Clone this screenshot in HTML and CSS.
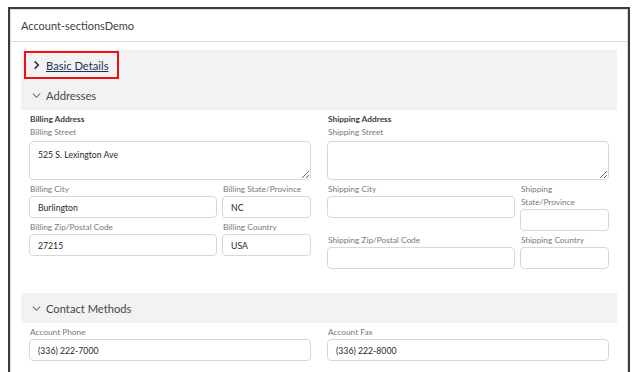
FILE: index.html
```html
<!DOCTYPE html>
<html lang="en">
<head>
  <meta charset="UTF-8" />
  <meta name="viewport" content="width=device-width, initial-scale=1" />
  <title>Account-sectionsDemo</title>
  <link rel="stylesheet" href="styles.css">
</head>
<body>
  <div class="frame">
    <div class="card">
      <div class="card-header">Account-sectionsDemo</div>

      <div class="card-body">
        <!-- collapsed section -->
        <section class="section">
          <div class="section-title collapsed">
            <svg class="chevron" viewBox="0 0 10 10"><path d="M3 1 L7 5 L3 9" /></svg>
            <a class="section-link" href="#">Basic Details</a>
            <span class="annotation"></span>
          </div>
        </section>

        <section class="section">
          <div class="section-title">
            <svg class="chevron" viewBox="0 0 10 10"><path d="M1 3 L5 7 L9 3" /></svg>
            <span>Addresses</span>
          </div>
          <div class="section-content">
            <div class="col">
              <div class="group-title">Billing Address</div>
              <label class="field-label">Billing Street</label>
              <textarea class="field-area" readonly>525 S. Lexington Ave</textarea>
              <div class="field-grid">
                <div class="field">
                  <label class="field-label">Billing City</label>
                  <input class="field-input" type="text" value="Burlington" readonly />
                </div>
                <div class="field">
                  <label class="field-label">Billing State/Province</label>
                  <input class="field-input" type="text" value="NC" readonly />
                </div>
                <div class="field">
                  <label class="field-label">Billing Zip/Postal Code</label>
                  <input class="field-input" type="text" value="27215" readonly />
                </div>
                <div class="field">
                  <label class="field-label">Billing Country</label>
                  <input class="field-input" type="text" value="USA" readonly />
                </div>
              </div>
            </div>

            <div class="col">
              <div class="group-title">Shipping Address</div>
              <label class="field-label">Shipping Street</label>
              <textarea class="field-area" readonly></textarea>
              <div class="field-grid">
                <div class="field">
                  <label class="field-label">Shipping City</label>
                  <input class="field-input" type="text" value="" readonly />
                </div>
                <div class="field">
                  <label class="field-label wrap">Shipping State/Province</label>
                  <input class="field-input" type="text" value="" readonly />
                </div>
                <div class="field">
                  <label class="field-label">Shipping Zip/Postal Code</label>
                  <input class="field-input" type="text" value="" readonly />
                </div>
                <div class="field">
                  <label class="field-label">Shipping Country</label>
                  <input class="field-input" type="text" value="" readonly />
                </div>
              </div>
            </div>
          </div>
        </section>

        <section class="section">
          <div class="section-title">
            <svg class="chevron" viewBox="0 0 10 10"><path d="M1 3 L5 7 L9 3" /></svg>
            <span>Contact Methods</span>
          </div>
          <div class="section-content">
            <div class="col">
              <label class="field-label">Account Phone</label>
              <input class="field-input" type="text" value="(336) 222-7000" readonly />
            </div>
            <div class="col">
              <label class="field-label">Account Fax</label>
              <input class="field-input" type="text" value="(336) 222-8000" readonly />
            </div>
          </div>
        </section>
      </div>
    </div>
  </div>
</body>
</html>
```

FILE: styles.css
```css
body {
  margin: 0;
  background: #fff;
  color: #3e3e3c;
  font-family: Lato, 'Open Sans', sans-serif;
}

/* Outer dark frame of the screenshot */
.frame {
  margin: 7px 0 0 8px;
  width: 622px;
  height: 365px;
  border: 2px solid #3b3b3b;
  border-bottom: none;
  box-sizing: border-box;
}

.card {
  height: 100%;
  border: 1px solid #dddbda;
  border-bottom: none;
  box-sizing: border-box;
}

.card-header {
  height: 31px;
  padding-left: 10px;
  display: flex;
  align-items: center;
  font-size: 11px;
  color: #3e3e3c;
  border-bottom: 1px solid #dddbda;
}

.card-body {
  padding: 8px 10px 0 10px;
}

/* Section headers (gray bands) */
.section-title {
  position: relative;
  height: 30px;
  display: flex;
  align-items: center;
  gap: 5px;
  padding-left: 11px;
  background: #f3f2f2;
  font-size: 11.2px;
  color: #4a4846;
}

.chevron {
  width: 9px;
  height: 9px;
  fill: none;
  stroke: #706e6b;
  stroke-width: 1.2;
}

.collapsed .chevron {
  height: 10px;
  stroke: #16325c;
  stroke-width: 1.7;
}

.section-link {
  color: #16325c;
  text-decoration: underline;
}

/* red highlight drawn over the first header */
.annotation {
  position: absolute;
  left: 3px;
  top: 1px;
  width: 95px;
  height: 28px;
  border: 2px solid #ee1111;
  box-sizing: border-box;
}

.section-content {
  display: grid;
  grid-template-columns: 1fr 1fr;
  column-gap: 16px;
  padding: 3px 8px 24px 8px;
}

.col {
  display: flex;
  flex-direction: column;
}

.group-title {
  font-size: 8.3px;
  font-weight: bold;
  line-height: 13px;
  padding-left: 1px;
  color: #3e3e3c;
}

.field-label {
  font-size: 8.3px;
  line-height: 13px;
  padding-left: 1px;
  color: #7a7876;
}

.field-label.wrap {
  padding-right: 20px;
}

.field-area {
  margin: 2px 0 3px 0;
  height: 39px;
  resize: vertical;
  border: 1px solid #d8d8d8;
  border-radius: 4px;
  padding: 6px 8px;
  font-family: Lato, 'Open Sans', sans-serif;
  font-size: 8.7px;
  line-height: 14px;
  color: #2b2826;
  box-sizing: border-box;
  outline: none;
}

.field-grid {
  display: grid;
  grid-template-columns: 188fr 89fr;
  column-gap: 5px;
  row-gap: 3px;
  align-items: start;
}

.field {
  display: flex;
  flex-direction: column;
}

.field-input {
  height: 22px;
  width: 100%;
  margin: 0;
  border: 1px solid #d8d8d8;
  border-radius: 4px;
  padding: 0 8px;
  font-family: Lato, 'Open Sans', sans-serif;
  font-size: 8.7px;
  color: #2b2826;
  box-sizing: border-box;
  outline: none;
}
```
